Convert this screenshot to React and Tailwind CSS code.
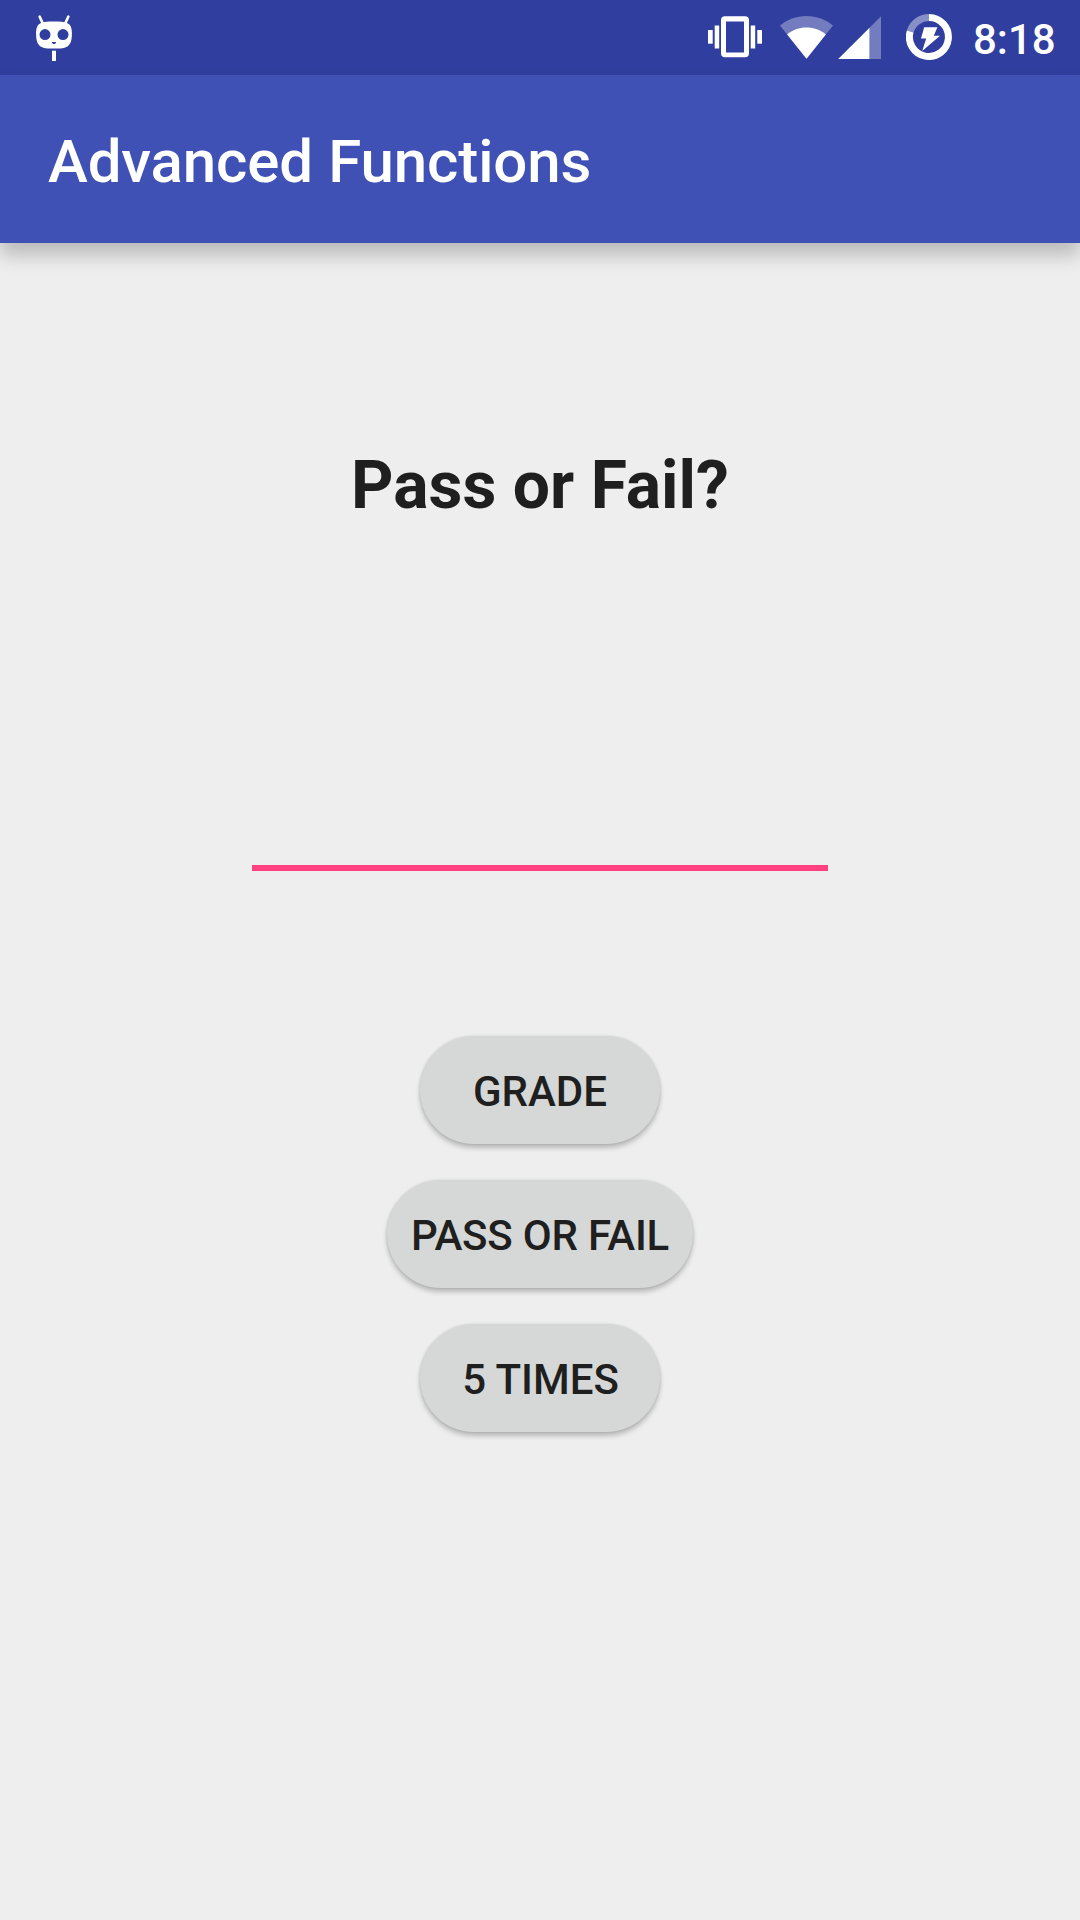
const BUTTONS = [
  { label: "GRADE", width: "w-[240px]", text: "" },
  { label: "PASS OR FAIL", width: "w-[306px]", text: "tracking-[-0.2px]" },
  { label: "5 TIMES", width: "w-[240px]", text: "pl-px" },
];

function RobotIcon() {
  return (
    <svg width="36" height="46" viewBox="36 15 36 46" fill="white">
      <path d="M39.7 16.7l2.8 6.2M68.300 16.700l-2.800 6.200" stroke="white" strokeWidth="2.6" strokeLinecap="round" />
      <path
        fillRule="evenodd"
        d="M54 21.400c5.500 0 10 .3 13 1.600 3.800 1.700 4.900 5 4.900 10.500 0 6.500-1 10.500-4.500 12.900-2.600 1.800-6.400 2.200-13.400 2.200s-10.800-.4-13.400-2.200c-3.500-2.400-4.500-6.400-4.500-12.900 0-5.500 1.100-8.800 4.900-10.500 3-1.300 7.500-1.600 13-1.600zM45 29.100a5.500 5.500 0 1 0 0 11 5.500 5.500 0 0 0 0-11zM63 29.100a5.500 5.500 0 1 0 0 11 5.500 5.500 0 0 0 0-11zM52 42c0 2.700 4 2.700 4 0z"
      />
      <rect x="52" y="50.700" width="4" height="10.300" />
    </svg>
  );
}

function VibrateIcon() {
  return (
    <svg width="54" height="42" viewBox="708 16 54 42" fill="white">
      <rect x="708" y="30" width="4.700" height="13.700" />
      <rect x="714.700" y="25.500" width="4.500" height="23" />
      <rect x="750.700" y="25.500" width="4.500" height="23" />
      <rect x="757.300" y="30" width="4.700" height="13.700" />
      <path fillRule="evenodd" d="M725 16.300h20a4 4 0 0 1 4 4v33a4 4 0 0 1-4 4h-20a4 4 0 0 1-4-4v-33a4 4 0 0 1 4-4zM726 21.500v31h18v-31z" />
    </svg>
  );
}

function WifiIcon() {
  return (
    <svg width="54" height="44" viewBox="780 16 54 44" fill="white">
      <path fillOpacity=".32" d="M806.500 58.800L780 25.600c7-6 16.500-9.600 26.500-9.600s19.500 3.600 26.500 9.600z" />
      <path d="M806.500 58.800L787.200 34.400c5.200-4.300 12-6.800 19.300-6.800s14.100 2.500 19.300 6.800z" />
    </svg>
  );
}

function SignalIcon() {
  return (
    <svg width="43" height="44" viewBox="838 16 43 44" fill="white">
      <path fillOpacity=".32" d="M869.500 27.700L881 16.200V59h-11.500z" />
      <path d="M838.200 59L869.500 27.700V59z" />
    </svg>
  );
}

function BatteryIcon() {
  return (
    <svg width="46" height="46" viewBox="0 0 46 46" fill="none">
      <path d="M23 3.500A19.500 19.500 0 1 1 4.200 17.500" stroke="white" strokeWidth="7" />
      <path d="M4.200 17.500A19.500 19.500 0 0 1 23 3.500" stroke="white" strokeOpacity=".42" strokeWidth="7" />
      <path d="M18.200 13.300h13.200l-3.600 8.400h6.200L16.200 37l4-12.600h-5.200z" fill="white" />
    </svg>
  );
}

export default function App() {
  return (
    <div className="flex h-[1920px] w-[1080px] flex-col overflow-hidden bg-[#eeeeee] font-['Roboto',sans-serif] text-[#1e1f1e]">
      <div className="flex h-[75px] shrink-0 items-start bg-[#303f9f] pl-9 text-white">
        <div className="mt-[15px]"><RobotIcon /></div>
        <div className="mt-4 ml-[636px]"><VibrateIcon /></div>
        <div className="mt-4 ml-[18px]"><WifiIcon /></div>
        <div className="mt-4 ml-1"><SignalIcon /></div>
        <div className="mt-[14px] ml-[25px]"><BatteryIcon /></div>
        <div className="mt-4 ml-[21px] text-[42px] leading-[48px] font-medium">8:18</div>
      </div>
      <header className="flex h-[168px] shrink-0 items-center bg-[#3f51b5] px-12 pt-[5px] text-white shadow-[0_12px_18px_rgba(0,0,0,0.22)]">
        <h1 className="text-[60px] leading-[70px] font-medium tracking-[-0.12px] [word-spacing:0.5px]">Advanced Functions</h1>
      </header>
      <main className="flex flex-col items-center">
        <h2 className="mt-[204px] text-[66px] leading-[78px] font-bold">Pass or Fail?</h2>
        <input
          aria-label="Grade"
          className="mt-[224px] h-[122px] w-[576px] border-b-6 border-[#ff4081] bg-transparent text-center text-[54px] outline-none"
        />
        <div className="mt-[165px] flex flex-col items-center gap-9">
          {BUTTONS.map((b) => (
            <button
              key={b.label}
              className={`${b.width} ${b.text} h-[108px] rounded-[54px] bg-[#d6d8d7] pt-1 text-[42px] leading-[48px] font-medium whitespace-nowrap shadow-[0_4px_5px_rgba(0,0,0,0.22),0_0_3px_rgba(0,0,0,0.12)]`}
            >
              {b.label}
            </button>
          ))}
        </div>
      </main>
    </div>
  );
}
